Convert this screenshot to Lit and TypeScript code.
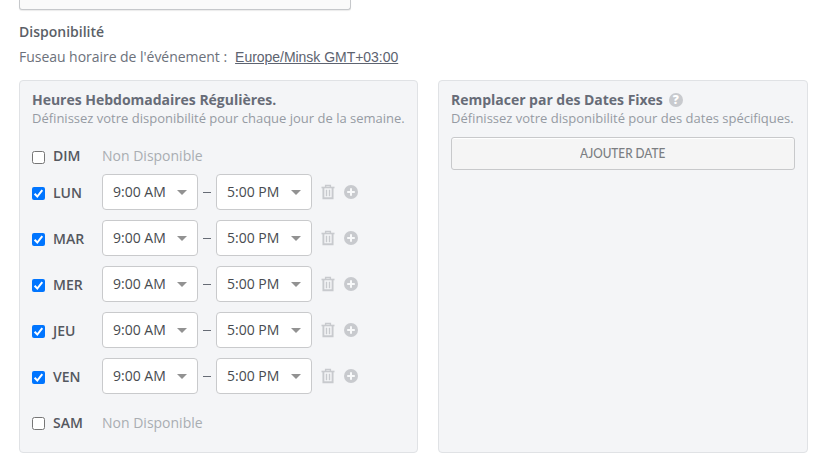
import { LitElement, html, css } from "lit";
import { customElement, property } from "lit/decorators.js";

interface Day {
  name: string;
  open: boolean;
}

const DAYS: Day[] = [
  { name: "DIM", open: false },
  { name: "LUN", open: true },
  { name: "MAR", open: true },
  { name: "MER", open: true },
  { name: "JEU", open: true },
  { name: "VEN", open: true },
  { name: "SAM", open: false },
];

@customElement("time-select")
export class TimeSelect extends LitElement {
  @property() value = "";

  static styles = css`
    :host {
      box-sizing: border-box;
      width: 96px;
      height: 36px;
      padding: 0 10px;
      border: 1px solid #c9cacc;
      border-radius: 4px;
      background: #fff;
      color: #484b50;
      font-size: 14px;
      line-height: 34px;
      display: flex;
      align-items: center;
      justify-content: space-between;
      white-space: nowrap;
    }
    .arrow {
      width: 10px;
      height: 5px;
      display: block;
      fill: #929292;
    }
  `;

  render() {
    return html`<span>${this.value}</span>
      <svg class="arrow" viewBox="0 0 10 5"><path d="M0 0h10L5 5z" /></svg>`;
  }
}

@customElement("day-row")
export class DayRow extends LitElement {
  @property({ attribute: false }) day!: Day;

  static styles = css`
    :host {
      display: flex;
      align-items: center;
      height: 46px;
    }
    .box {
      width: 13px;
      height: 13px;
      margin: 3px 8px 0 0;
      flex: none;
      display: block;
    }
    .name {
      width: 49px;
      flex: none;
      font-size: 14px;
      font-weight: 550;
      color: #54585f;
      line-height: 20px;
    }
    .name.open,
    :host(.last) .name,
    :host(.last) .closed {
      padding-top: 2px;
    }
    .closed {
      color: #a9adb2;
      font-size: 14px;
      line-height: 20px;
    }
    .dash {
      width: 8px;
      height: 1px;
      background: #666b75;
      margin: 0 5px;
    }
    .trash {
      width: 14px;
      height: 16px;
      margin-left: 9px;
    }
    .plus {
      width: 14px;
      height: 14px;
      margin-left: 9px;
    }
  `;

  render() {
    const { name, open } = this.day;
    return html`
      ${open
        ? html`<svg class="box" viewBox="0 0 13 13">
            <rect width="13" height="13" rx="2" fill="#0075ff" />
            <path d="M2.6 6.8l2.7 2.7 5-6.3" fill="none" stroke="#fff" stroke-width="2" />
          </svg>`
        : html`<svg class="box" viewBox="0 0 13 13">
            <rect x=".5" y=".5" width="12" height="12" rx="2" fill="#fff" stroke="#767676" />
          </svg>`}
      <span class="name ${open ? "open" : ""}">${name}</span>
      ${open
        ? html`
            <time-select value="9:00 AM"></time-select>
            <span class="dash"></span>
            <time-select value="5:00 PM"></time-select>
            <svg class="trash" viewBox="0 0 14 16" fill="none" stroke="#c8cace">
              <path d="M.5 3.5h13" stroke-width="1.6" />
              <path d="M4.6 3V1.5h4.8V3" stroke-width="1.4" />
              <path d="M2.4 4v10.2h9.2V4" stroke-width="1.9" />
              <path d="M5.5 5.7v6.6M8.5 5.7v6.6" stroke-width="1.4" />
            </svg>
            <svg class="plus" viewBox="0 0 14 14">
              <circle cx="7" cy="7" r="7" fill="#c8cace" />
              <path d="M7 3.2v7.6M3.2 7h7.6" stroke="#f8f9fa" stroke-width="2" />
            </svg>
          `
        : html`<span class="closed">Non Disponible</span>`}
    `;
  }
}

@customElement("app-root")
export class AppRoot extends LitElement {
  static styles = css`
    :host {
      display: block;
      box-sizing: border-box;
      height: 454px;
      overflow: hidden;
      padding: 0 20px 0 19px;
      background: #fff;
      font-family: "Open Sans", sans-serif;
      color: #6c717b;
    }
    .field {
      box-sizing: border-box;
      width: 332px;
      height: 10px;
      border: 1px solid #c6c8cb;
      border-top: 0;
      border-radius: 0 0 3px 3px;
      background: #fafafa;
      box-shadow: 0 1px 1px #ececec;
    }
    .title {
      margin-top: 12px;
      height: 20px;
      line-height: 20px;
      font-size: 14px;
      font-weight: 600;
      color: #5b5f67;
    }
    .zone {
      display: flex;
      gap: 8px;
      margin-top: 5px;
      height: 20px;
      line-height: 20px;
      font-size: 14px;
      white-space: nowrap;
    }
    .label {
      letter-spacing: -0.035px;
    }
    .link {
      font-family: "Liberation Sans", Arial, sans-serif;
      letter-spacing: -0.03px;
      text-decoration: underline;
      color: #5d6370;
    }
    .cards {
      display: grid;
      grid-template-columns: 399px 370px;
      gap: 20px;
      margin-top: 13px;
    }
    .card {
      box-sizing: border-box;
      height: 373px;
      padding: 9px 12px 0;
      border: 1px solid #e0e2e5;
      border-radius: 4px;
      background: #f4f5f7;
      white-space: nowrap;
    }
    .heading {
      display: flex;
      align-items: center;
      gap: 6px;
      height: 19px;
      font-size: 14px;
      line-height: 19px;
      font-weight: 700;
      letter-spacing: -0.02px;
      color: #676c77;
    }
    .help {
      width: 14px;
      height: 14px;
      border-radius: 7px;
      background: #c8cace;
      color: #fff;
      font-size: 12px;
      font-weight: 800;
      line-height: 14px;
      text-align: center;
    }
    .sub {
      height: 18px;
      line-height: 18px;
      font-size: 13px;
      color: #969ba3;
    }
    .days {
      margin-top: 16px;
    }
    .first {
      height: 26px;
    }
    .add {
      box-sizing: border-box;
      width: 344px;
      height: 33px;
      display: block;
      margin-top: 10px;
      padding: 0 0 2px;
      border: 1px solid #c8c9cb;
      border-radius: 3px;
      background: #f5f5f5;
      box-shadow: inset 0 1px 0 #fff;
      color: #7b7e82;
      font-family: Lato, sans-serif;
      font-size: 13.5px;
      font-weight: 500;
    }
    .caps {
      display: inline-block;
      transform: scaleX(0.875);
    }
  `;

  render() {
    const edge = (i: number) => (i === 0 ? "first" : i === DAYS.length - 1 ? "last" : "");
    return html`
      <div class="field"></div>
      <div class="title">Disponibilité</div>
      <div class="zone">
        <span class="label">Fuseau horaire de l'événement :</span>
        <span class="link">Europe/Minsk GMT+03:00</span>
      </div>
      <div class="cards">
        <section class="card">
          <div class="heading">Heures Hebdomadaires Régulières.</div>
          <div class="sub">Définissez votre disponibilité pour chaque jour de la semaine.</div>
          <div class="days">
            ${DAYS.map((day, i) => html`<day-row class=${edge(i)} .day=${day}></day-row>`)}
          </div>
        </section>
        <section class="card">
          <div class="heading">Remplacer par des Dates Fixes <span class="help">?</span></div>
          <div class="sub">Définissez votre disponibilité pour des dates spécifiques.</div>
          <button class="add"><span class="caps">AJOUTER DATE</span></button>
        </section>
      </div>
    `;
  }
}
